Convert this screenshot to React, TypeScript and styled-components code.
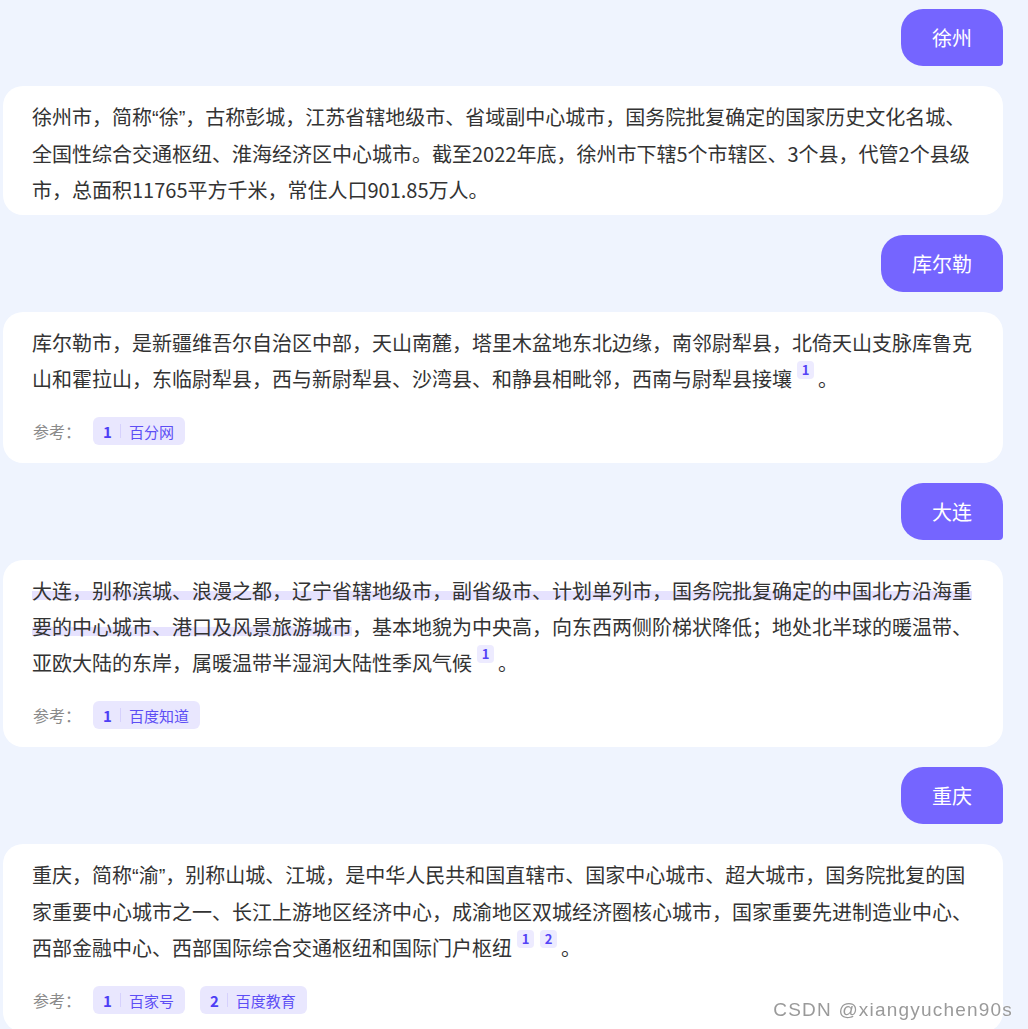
import React from "react";
import styled, { createGlobalStyle } from "styled-components";

const GlobalStyle = createGlobalStyle`
  html, body {
    margin: 0;
    padding: 0;
    background: #eff4fe;
    overflow: hidden;
  }
  body {
    font-family: "Noto Sans CJK SC", "Noto Sans", sans-serif;
  }
`;

const SChat = styled.div`
  display: flex;
  flex-direction: column;
  gap: 20px;
  padding: 9px 25px 0 3px;
`;

const SUserBubble = styled.div`
  align-self: flex-end;
  display: flex;
  align-items: center;
  height: 57px;
  padding: 0 31px;
  background: #7565ff;
  color: #fff;
  font-size: 20px;
  font-weight: 400;
  border-radius: 22px 22px 4px 22px;
`;

const SAnswer = styled.div`
  background: #fff;
  border-radius: 20px;
  padding: 13px 28px 7px 29px;
`;

const SText = styled.p`
  margin: 0;
  font-size: 20px;
  line-height: 36px;
  color: #333;
`;

const SQuote = styled.span`
  font-family: "Liberation Sans", sans-serif;
`;

const SHighlight = styled.span`
  background: linear-gradient(
    transparent 50%,
    #e6e2fe 50%,
    #e6e2fe 82%,
    transparent 82%
  );
  border-radius: 6px;
`;

const SCite = styled.span`
  display: inline-flex;
  align-items: center;
  justify-content: center;
  width: 17px;
  height: 18px;
  margin: 0 4px 0 5px;
  vertical-align: top;
  border-radius: 4px;
  background: #edebff;
  color: #5444f6;
  font-size: 13px;
  line-height: 18px;
  font-weight: 600;
  & + & {
    margin-left: 2px;
  }
`;

const SRefRow = styled.div`
  display: flex;
  align-items: center;
  margin: 20px 0 11px 0;
`;

const SRefLabel = styled.span`
  font-size: 16px;
  color: #8a8a8a;
  margin: 0 12px 0 1px;
`;

const SRefChip = styled.span`
  display: inline-flex;
  align-items: center;
  height: 28px;
  padding: 0 11px 0 10px;
  border-radius: 6px;
  background: #e9e7fe;
  & + & {
    margin-left: 15px;
  }
`;

const SRefNum = styled.span`
  font-size: 15px;
  font-weight: 700;
  color: #4d3ef5;
`;

const SRefDivider = styled.span`
  width: 1px;
  height: 14px;
  margin: 0 8px;
  background: #d6d1fd;
`;

const SRefName = styled.span`
  font-size: 15px;
  color: #5d4ef5;
`;

const SWatermark = styled.div`
  position: fixed;
  right: 15px;
  bottom: 8px;
  font-family: "Liberation Sans", Arial, sans-serif;
  font-size: 19px;
  letter-spacing: 1.2px;
  color: #9a9a9a;
  text-shadow: 0 0 2px #fff;
  pointer-events: none;
`;

type Ref = { name: string };

function RefList({ refs }: { refs: Ref[] }) {
  return (
    <SRefRow>
      <SRefLabel>参考：</SRefLabel>
      {refs.map((r, i) => (
        <SRefChip key={r.name}>
          <SRefNum>{i + 1}</SRefNum>
          <SRefDivider />
          <SRefName>{r.name}</SRefName>
        </SRefChip>
      ))}
    </SRefRow>
  );
}

export default function App() {
  return (
    <>
      <GlobalStyle />
      <SChat>
        <SUserBubble>徐州</SUserBubble>
        <SAnswer>
          <SText>
            徐州市，简称<SQuote>“</SQuote>徐<SQuote>”</SQuote>
            ，古称彭城，江苏省辖地级市、省域副中心城市，国务院批复确定的国家历史文化名城、全国性综合交通枢纽、淮海经济区中心城市。截至2022年底，徐州市下辖5个市辖区、3个县，代管2个县级市，总面积11765平方千米，常住人口901.85万人。
          </SText>
        </SAnswer>

        <SUserBubble>库尔勒</SUserBubble>
        <SAnswer>
          <SText>
            库尔勒市，是新疆维吾尔自治区中部，天山南麓，塔里木盆地东北边缘，南邻尉犁县，北倚天山支脉库鲁克山和霍拉山，东临尉犁县，西与新尉犁县、沙湾县、和静县相毗邻，西南与尉犁县接壤
            <SCite>1</SCite>。
          </SText>
          <RefList refs={[{ name: "百分网" }]} />
        </SAnswer>

        <SUserBubble>大连</SUserBubble>
        <SAnswer>
          <SText>
            <SHighlight>
              大连，别称滨城、浪漫之都，辽宁省辖地级市，副省级市、计划单列市，国务院批复确定的中国北方沿海重要的中心城市、港口及风景旅游城市
            </SHighlight>
            ，基本地貌为中央高，向东西两侧阶梯状降低；地处北半球的暖温带、亚欧大陆的东岸，属暖温带半湿润大陆性季风气候
            <SCite>1</SCite>。
          </SText>
          <RefList refs={[{ name: "百度知道" }]} />
        </SAnswer>

        <SUserBubble>重庆</SUserBubble>
        <SAnswer>
          <SText>
            重庆，简称<SQuote>“</SQuote>渝<SQuote>”</SQuote>
            ，别称山城、江城，是中华人民共和国直辖市、国家中心城市、超大城市，国务院批复的国家重要中心城市之一、长江上游地区经济中心，成渝地区双城经济圈核心城市，国家重要先进制造业中心、西部金融中心、西部国际综合交通枢纽和国际门户枢纽
            <SCite>1</SCite>
            <SCite>2</SCite>。
          </SText>
          <RefList refs={[{ name: "百家号" }, { name: "百度教育" }]} />
        </SAnswer>
      </SChat>
      <SWatermark>CSDN @xiangyuchen90s</SWatermark>
    </>
  );
}
